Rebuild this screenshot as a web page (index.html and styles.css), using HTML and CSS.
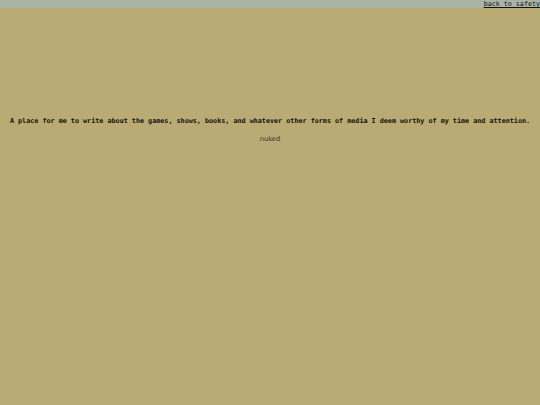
FILE: index.html
```html
<!DOCTYPE html>
<html>
<head>
<meta charset="utf-8">
<link rel="stylesheet" href="styles.css">
</head>
<body>
<header class="topbar"><a class="back" href="#">back to safety</a></header>
<main class="content">
<p class="tagline">A place for me to write about the games, shows, books, and whatever other forms of media I deem worthy of my time and attention.</p>
<p class="status">nuked</p>
</main>
</body>
</html>
```
FILE: styles.css
```css
html, body {
  margin: 0;
  padding: 0;
  background: #b9ab73;
  height: 100%;
}
.topbar {
  height: 8px;
  background: #aab4a6;
  display: flex;
  justify-content: flex-end;
  align-items: center;
}
.back {
  font-family: "DejaVu Sans Mono", monospace;
  font-size: 6.7px;
  line-height: 8px;
  color: #111;
  text-decoration: underline;
}
.content {
  display: flex;
  flex-direction: column;
  align-items: center;
  padding-top: 109px;
}
.tagline {
  margin: 0;
  font-family: "DejaVu Sans Mono", monospace;
  font-weight: bold;
  font-size: 6.75px;
  line-height: 8px;
  color: #111;
  text-align: center;
}
.status {
  margin: 10px 0 0;
  font-family: "DejaVu Sans", sans-serif;
  font-size: 6.7px;
  line-height: 8px;
  color: #333;
}
```
